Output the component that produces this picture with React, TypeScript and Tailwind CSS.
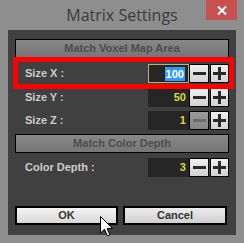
import React from "react";

interface RowProps {
  label: string;
  value: string;
  selected?: boolean;
  minusDisabled?: boolean;
  className?: string;
}

const HeaderBar: React.FC<{ title: string; className?: string }> = ({ title, className }) => {
  return (
    <div
      className={`flex h-[19px] w-[214px] items-center justify-center border border-black bg-gradient-to-b from-[#888888] to-[#767676] text-[11px] font-bold text-[#4d4d4d] ${className ?? ""}`}
    >
      {title}
    </div>
  );
};

const StepButton: React.FC<{ sign: "-" | "+"; disabled?: boolean; className?: string }> = ({
  sign,
  disabled,
  className,
}) => {
  const color = disabled ? "#6a6a6a" : "#2a2a2a";
  return (
    <div
      className={`flex h-[19px] items-center justify-center border border-black ${
        disabled ? "bg-gradient-to-b from-[#9a9a9a] to-[#858585]" : "bg-gradient-to-b from-[#f0f0f0] to-[#d2d2d2]"
      } ${className ?? ""}`}
    >
      <svg width="13" height="13" viewBox="0 0 13 13">
        <rect x="0" y="5" width="13" height="3" fill={color} />
        {sign === "+" && <rect x="5" y="0" width="3" height="13" fill={color} />}
      </svg>
    </div>
  );
};

const Row: React.FC<RowProps> = ({ label, value, selected, minusDisabled, className }) => {
  return (
    <div className={`flex h-[19px] items-center ${className ?? ""}`}>
      <div className="w-[136px] pl-[10px] text-[11px] font-bold text-[#cdcdcd]">{label}</div>
      <div
        className={`flex h-[19px] w-[42px] items-center justify-end pr-[3px] text-[11px] font-bold ${
          selected ? "border border-[#b9b46a] bg-[#262626]" : "bg-[#262626]"
        }`}
      >
        {selected ? (
          <span className="bg-[#3399ff] px-px leading-[14px] text-white">{value}</span>
        ) : (
          <span className="text-[#d2dc3c]">{value}</span>
        )}
      </div>
      <StepButton sign="-" disabled={minusDisabled} className="w-[21px]" />
      <StepButton sign="+" className="ml-[1px] w-[19px]" />
    </div>
  );
};

const App: React.FC = () => {
  return (
    <div
      className="relative h-[243px] w-[244px] overflow-hidden bg-[#8e8e8e]"
      style={{ fontFamily: '"Liberation Sans", Arial, sans-serif' }}
    >
      <div className="flex h-[30px] items-center justify-center">
        <span
          className="text-[16px] text-[#3b3b3b]"
          style={{ fontFamily: '"Open Sans", "Noto Sans", sans-serif' }}
        >
          Matrix Settings
        </span>
      </div>
      <div className="absolute right-[7px] top-0 flex h-[20px] w-[31px] items-center justify-center bg-[#c75050]">
        <svg width="10" height="9" viewBox="0 0 10 9">
          <path d="M1 0.5 L9 8.5 M9 0.5 L1 8.5" stroke="#ffffff" strokeWidth="2" />
        </svg>
      </div>

      <div className="relative ml-[8px] flex h-[205px] w-[228px] flex-col bg-[#404040] px-[7px] pt-[9px]">
        <HeaderBar title="Match Voxel Map Area" />
        <Row label="Size X :" value="100" selected className="mt-[6px]" />
        <Row label="Size Y :" value="50" className="mt-[5px]" />
        <Row label="Size Z :" value="1" minusDisabled className="mt-[4px]" />
        <HeaderBar title="Match Color Depth" className="mt-[4px]" />
        <Row label="Color Depth :" value="3" className="mt-[5px]" />

        <div className="mt-[29px] flex gap-[5px]">
          <div className="flex h-[19px] w-[103px] items-center justify-center border-2 border-black bg-gradient-to-b from-[#f4f4f4] to-[#d8d8d8] text-[11px] font-bold text-[#333333]">
            OK
          </div>
          <div className="flex h-[19px] w-[104px] items-center justify-center border-2 border-black bg-gradient-to-b from-[#ececec] to-[#cfcfcf] text-[11px] font-bold text-[#333333]">
            Cancel
          </div>
        </div>

        {/* red highlight annotation */}
        <div className="pointer-events-none absolute left-[5px] top-[27px] h-[32px] w-[221px] border-[5px] border-[#ff0000]" />
      </div>

      {/* mouse cursor */}
      <svg className="absolute left-[100px] top-[216px]" width="14" height="22" viewBox="0 0 14 22">
        <path
          d="M0.5 0.5 L0.5 17 L4.5 13.2 L7.3 19.8 L9.8 18.8 L7.1 12.4 L12.5 12.4 Z"
          fill="#ffffff"
          stroke="#000000"
          strokeWidth="1"
          strokeLinejoin="miter"
        />
      </svg>
    </div>
  );
};

export default App;
